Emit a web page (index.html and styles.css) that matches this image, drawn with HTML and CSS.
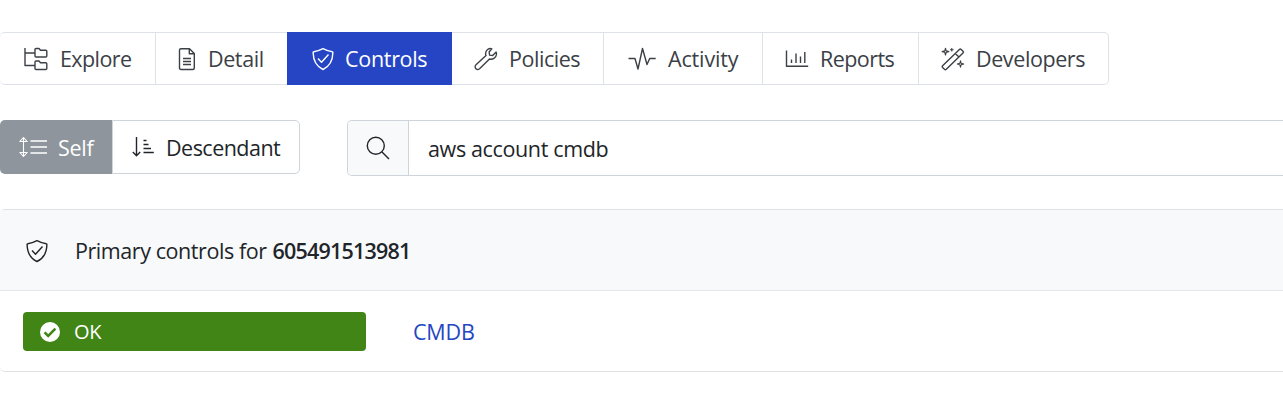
FILE: index.html
```html
<!DOCTYPE html>
<html lang="en">
<head>
<meta charset="utf-8">
<title>Controls</title>
<link rel="stylesheet" href="styles.css">
</head>
<body>
<svg class="defs" width="0" height="0">
  <symbol id="shield" viewBox="0 0 22 24"><path d="M11 1.700C8 3.300 4.900 4.400 1.800 4.700c-.5 0-.7.3-.7.8C1.300 13 4 19.300 11 22.500 18 19.300 20.700 13 20.900 5.500c0-.5-.2-.8-.7-.8C17.100 4.400 14 3.300 11 1.700ZM6 11.600l3.500 3.700 7-7.800"/></symbol>
</svg>
<nav class="tabs">
  <a class="tab explore"><svg class="icon" width="24" height="24" viewBox="0 0 24 24"><path d="M1 1v17.500h10M1 6h10M11 2.500q0-1 1-1h3l1.500 1.700h5.300q1 0 1 1V9q0 1-1 1H12q-1 0-1-1ZM11 15q0-1 1-1h3l1.500 1.700h5.300q1 0 1 1v4.800q0 1-1 1H12q-1 0-1-1Z"/></svg><span>Explore</span></a>
  <a class="tab detail"><svg class="icon" width="18" height="24" viewBox="0 0 18 24"><path d="M3 1.700h8.500L16.300 6.500V21q0 1.500-1.500 1.500H3Q1.500 22.500 1.500 21V3.200Q1.500 1.700 3 1.700ZM11.300 1.700V6.700h5M5 11.500h8M5 14.500h8M5 17.500h8"/></svg><span>Detail</span></a>
  <a class="tab controls active"><svg class="icon" width="22" height="24"><use href="#shield"/></svg><span>Controls</span></a>
  <a class="tab policies"><svg class="icon" width="24" height="24" viewBox="0 0 24 24"><path d="M17.800 1.800c-3-.9-6.200 1.300-6.200 4.600 0 .8.100 1.500.4 2.200L2 17.800c-1.200 1.100-1.200 2.800-.1 3.900s2.800 1.100 3.900-.1L15.500 12c2.900.9 6.700-1.200 7-4.700 0-.9-.1-1.700-.4-2.200L18.700 8.500l-3.100-.4-.5-3.100ZM4.100 19.600h.1"/></svg><span>Policies</span></a>
  <a class="tab activity"><svg class="icon" width="28" height="24" viewBox="0 0 28 24"><path d="M.5 11.500H7L10 22l4.500-20.500L19 17.500l2.700-6h6"/></svg><span>Activity</span></a>
  <a class="tab reports"><svg class="icon" width="24" height="24" viewBox="0 0 24 24"><path d="M1.500 3.500v15.800h21.700M6.500 12.500V16M11 6.500V16M15.500 9.500V16M19.800 5V16"/></svg><span>Reports</span></a>
  <a class="tab developers"><svg class="icon" width="24" height="24" viewBox="0 0 24 24"><path d="m1.600 18.700 16.800-16.300q.9-.8 1.800 0l1.800 1.800q.8.900 0 1.800L5.300 22.300q-.9.800-1.800 0l-1.900-1.900q-.8-.8 0-1.700ZM14.200 6.400l3.800 3.700"/><path class="fine" d="M4.500 1.200l.7 2.700 2.700.7-2.700.7-.7 2.700-.7-2.700-2.700-.7 2.700-.7ZM10.800 1v3.600M9 2.800h3.600M19.500 13.800l.7 2.500 2.500.7-2.500.7-.7 2.500-.7-2.500-2.500-.7 2.500-.7Z"/></svg><span>Developers</span></a>
</nav>
<div class="toolbar">
  <div class="scope">
    <button class="self"><svg class="icon" width="28" height="22" viewBox="0 0 28 22"><path class="fine" d="M4.500 2v18M.8 5.500l3.700-4 3.700 4ZM.8 16.500l3.700 4 3.700-4Z"/><path d="M11.500 5H28M11.500 11H28M11.500 17H28"/></svg><span>Self</span></button>
    <button class="descendant"><svg class="icon" width="22" height="22" viewBox="0 0 22 22"><path d="M4.500 1v18.500M.8 16l3.700 3.700L8.200 16M11.500 4.500h3M11.500 8.500h5M11.500 12.500h7.500M11.500 16.500h10.300"/></svg><span>Descendant</span></button>
  </div>
  <div class="search">
    <div class="search-icon"><svg class="icon" width="24" height="24" viewBox="0 0 24 24"><circle cx="9.800" cy="9.800" r="8.500"/><path d="m16 16 7 7"/></svg></div>
    <div class="query"><span>aws account cmdb</span></div>
  </div>
</div>
<section class="panel">
  <header><svg class="icon" width="22" height="24"><use href="#shield"/></svg><span class="heading">Primary controls for</span><strong>605491513981</strong></header>
  <div class="row">
    <div class="status"><svg width="20" height="20" viewBox="0 0 20 20"><circle cx="10" cy="10" r="10" fill="#fff"/><path d="m4.600 10.300 3.600 3.600 7.200-7.200" fill="none" stroke="#418517" stroke-width="2.500"/></svg><span>OK</span></div>
    <a class="cmdb"><span>CMDB</span></a>
  </div>
</section>
</body>
</html>
```
FILE: styles.css
```css
* { box-sizing: border-box; }
body {
  margin: 0;
  padding-top: 32px;
  overflow: hidden;
  background: #fff;
  color: #212529;
  font: 21.5px/30px "Open Sans", "Noto Sans", sans-serif;
}
.defs { display: block; }
span, strong { white-space: nowrap; }
.icon {
  flex: none;
  fill: none;
  stroke: currentColor;
  stroke-width: 1.400;
  stroke-linejoin: round;
}
.fine { stroke-width: 1.100; }
.tabs {
  display: flex;
  width: 1109px;
  height: 53px;
  border: 1px solid #dee2e6;
  border-left: 0;
  border-radius: 5px;
  color: #3b4046;
}
.tab {
  display: flex;
  align-items: center;
  gap: 12px;
  border-right: 1px solid #dee2e6;
  letter-spacing: -.4px;
}
.tab span { padding-top: 1px; }
.explore { width: 156px; padding-left: 24px; letter-spacing: -.6px; }
.detail { width: 131px; padding-left: 22px; border: 0; }
.controls { width: 165px; padding-left: 25px; gap: 11px; letter-spacing: -.3px; }
.policies { width: 152px; padding-left: 22px; gap: 11px; letter-spacing: -.45px; }
.activity { width: 159px; padding-left: 24px; letter-spacing: -.15px; }
.reports { width: 156px; padding-left: 22px; gap: 11px; letter-spacing: -.55px; }
.developers { width: 189px; padding-left: 22px; gap: 11px; border: 0; }
.active {
  margin: -1px 0;
  border: 0;
  background: #2545c4;
  color: #fff;
}
.toolbar {
  display: flex;
  align-items: flex-start;
  gap: 47px;
  margin-top: 35px;
}
.scope { display: flex; width: 300px; height: 54px; }
button {
  display: flex;
  align-items: center;
  margin: 0;
  font: inherit;
  color: inherit;
  padding-top: 0;
  padding-bottom: 0;
}
button span { padding-top: 2px; }
.self {
  width: 112px;
  padding-left: 19px;
  gap: 11px;
  border: 0;
  border-radius: 5px 0 0 5px;
  background: #8e959c;
  color: #fff;
  letter-spacing: -.3px;
}
.descendant {
  width: 188px;
  padding-left: 19px;
  gap: 12px;
  border: 1px solid #ced4da;
  border-radius: 0 5px 5px 0;
  background: #fff;
  letter-spacing: -.52px;
}
.search {
  display: flex;
  flex: 1;
  height: 56px;
  border: 1px solid #ced4da;
  border-right: 0;
  border-radius: 5px 0 0 5px;
}
.search-icon {
  display: flex;
  align-items: center;
  justify-content: center;
  width: 61px;
  border-right: 1px solid #ced4da;
  border-radius: 4px 0 0 4px;
  background: #f8f9fb;
}
.query { padding: 13px 0 0 19px; letter-spacing: -.36px; }
.panel {
  height: 163px;
  margin-top: 33px;
  border: 1px solid #dfe1e4;
  border-width: 1px 0;
  border-radius: 5px 0 0 5px;
}
.panel header {
  display: flex;
  align-items: center;
  height: 81px;
  padding: 2px 0 0 26px;
  border-bottom: 1px solid #e5e7e9;
  border-radius: 4px 0 0 0;
  background: #f8f9fb;
}
.heading { margin-left: 27px; letter-spacing: -.43px; }
strong { margin-left: 6px; font-weight: 600; letter-spacing: -.8px; }
.row { display: flex; align-items: center; padding: 21px 0 0 23px; }
.status {
  display: flex;
  align-items: center;
  gap: 14px;
  width: 343px;
  height: 39px;
  padding-left: 17px;
  border-radius: 4px;
  background: #418517;
  color: #fff;
  font-size: 20px;
  letter-spacing: -.3px;
}
.cmdb { margin-left: 47px; color: #2545c4; letter-spacing: -.2px; }
```
